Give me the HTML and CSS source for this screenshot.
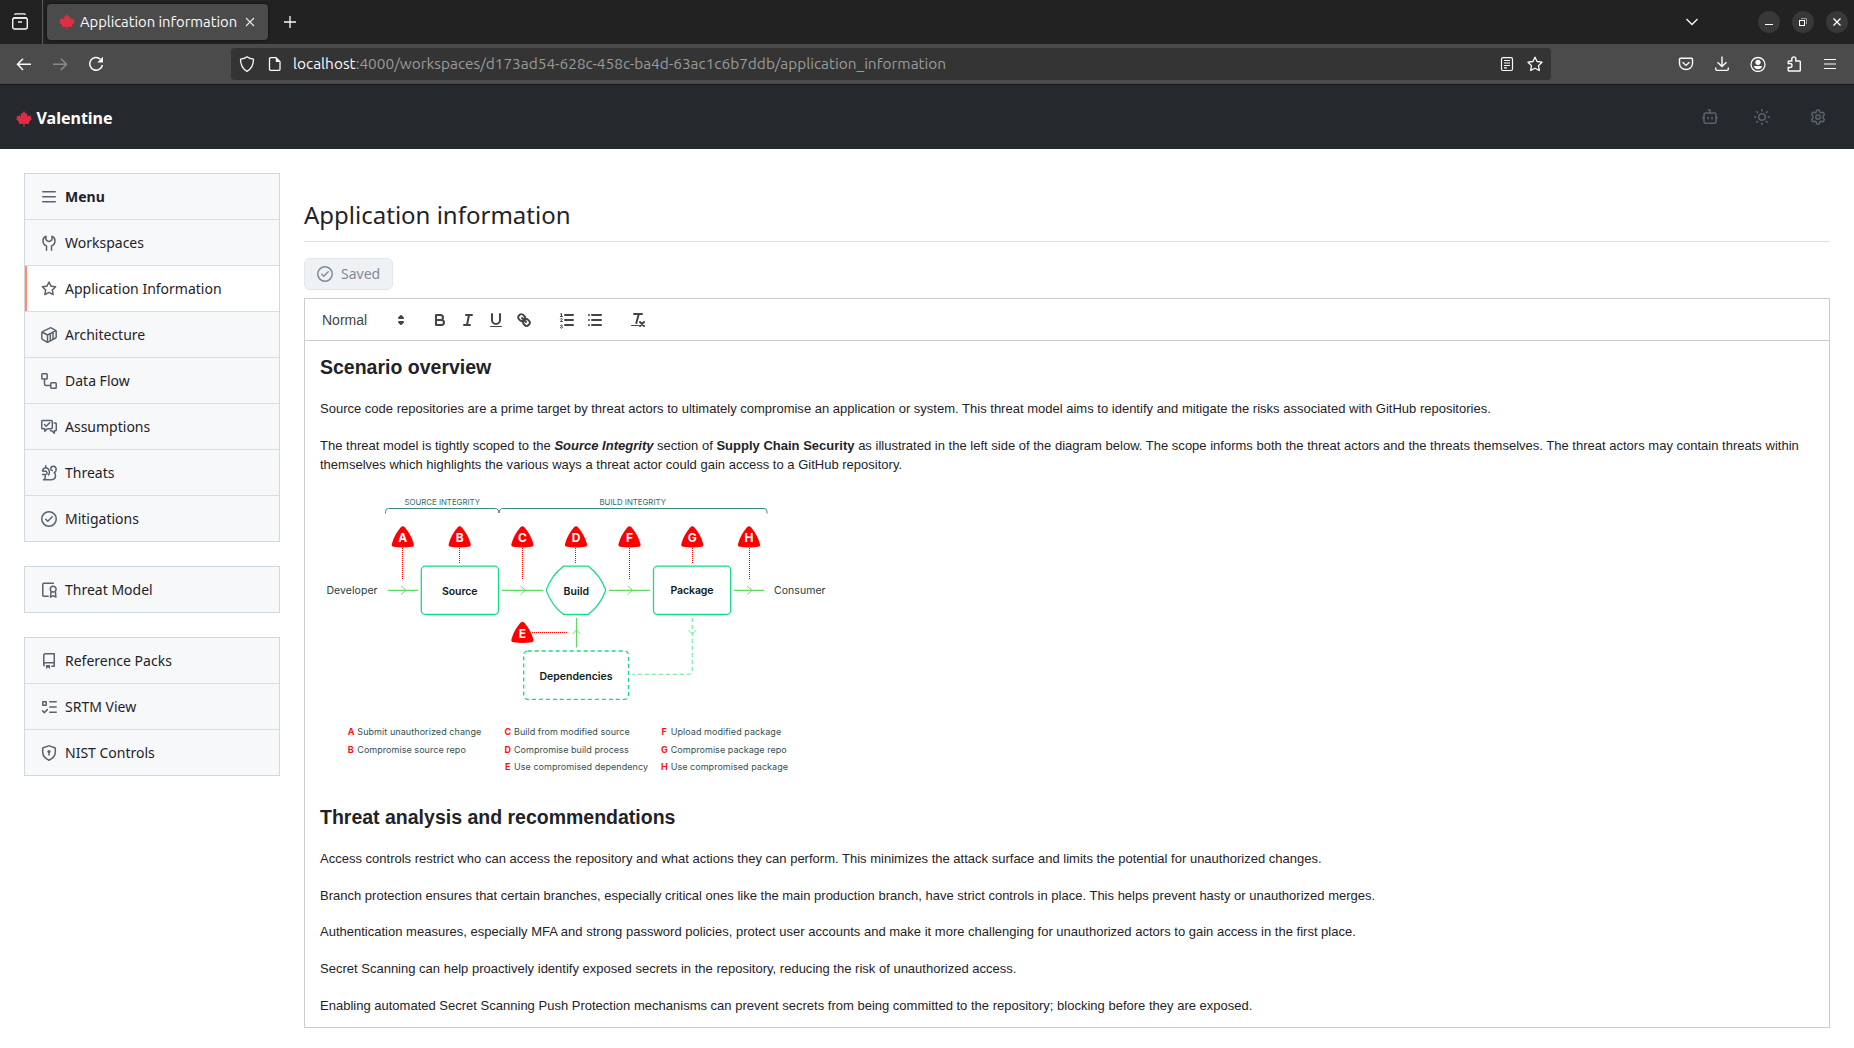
FILE: index.html
```html
<!DOCTYPE html>
<html lang="en">
<head>
<meta charset="utf-8">
<title>Application information</title>
<link rel="stylesheet" href="styles.css">
</head>
<body>
<svg width="0" height="0" class="defs" aria-hidden="true">
  <defs>
    <symbol id="leaf" viewBox="0 0 16 16"><path fill="#dd2e44" d="M8 0 9.800 2.700 11.300 1.900 11 5.500 13 3.900 13.500 5.200 15.300 5 14.900 7.200 16 8 12.800 11.200 13.300 12.900 8.500 12.800V16H7.500V12.800L2.700 12.900 3.200 11.200 0 8 1.100 7.200 .7 5 2.500 5.200 3 3.900 5 5.500 4.700 1.900 6.200 2.700Z"/></symbol>
    <symbol id="check-circle" viewBox="0 0 16 16"><path d="M0 8a8 8 0 1 1 16 0A8 8 0 0 1 0 8Zm1.500 0a6.500 6.500 0 1 0 13 0 6.500 6.500 0 0 0-13 0Zm10.280-1.720-4.500 4.500a.75.75 0 0 1-1.060 0l-2-2a.751.751 0 0 1 .018-1.042.751.751 0 0 1 1.042-.018l1.470 1.470 3.970-3.970a.751.751 0 0 1 1.042.018.751.751 0 0 1 .018 1.042Z"/></symbol>
    <symbol id="star" viewBox="0 0 16 16"><path d="M8 .25a.75.75 0 0 1 .673.418l1.882 3.815 4.210.612a.75.75 0 0 1 .416 1.279l-3.046 2.970.719 4.192a.751.751 0 0 1-1.088.791L8 12.347l-3.766 1.980a.75.75 0 0 1-1.088-.790l.720-4.194L.818 6.374a.75.75 0 0 1 .416-1.280l4.210-.611L7.327.668A.75.75 0 0 1 8 .250Zm0 2.445L6.615 5.500a.75.75 0 0 1-.564.410l-3.097.450 2.240 2.184a.75.75 0 0 1 .216.664l-.528 3.084 2.769-1.456a.75.75 0 0 1 .698 0l2.770 1.456-.530-3.084a.75.75 0 0 1 .216-.664l2.240-2.183-3.096-.450a.75.75 0 0 1-.564-.410L8 2.694Z"/></symbol>
    <path id="hazard" fill="#f00" d="M-2.200-19.500Q0-22 2.200-19.500C6-15 9-10 11-3Q11.500-.5 9-.2Q0 1-9-.2Q-11.500-.5-11-3C-9-10-6-15-2.200-19.500Z"/>
  </defs>
</svg>

<div class="tabstrip">
  <div class="recent"><svg width="18" height="18" viewBox="0 0 18 18"><g fill="none" stroke="#fbfbfe" stroke-width="1.400"><path d="M3.500 1.700Q4 .9 5 .9h8q1 0 1.500.8M2.200 4.900h13.600"/><rect x="1.700" y="5" width="14.600" height="11" rx="2"/><path d="M7 9h4"/></g></svg></div>
  <div class="tab">
    <svg class="tab-icon" width="16" height="16"><use href="#leaf"/></svg>
    <span class="tab-title">Application information</span>
    <svg class="tab-close" width="10" height="10" viewBox="0 0 10 10"><path d="M1 1l8 8M9 1L1 9" stroke="#e8e8ec" stroke-width="1.100"/></svg>
  </div>
  <svg class="tab-new" width="12" height="12" viewBox="0 0 12 12"><path d="M6 0v12M0 6h12" stroke="#fbfbfe" stroke-width="1.300"/></svg>
  <svg class="tab-list" width="12" height="8" viewBox="0 0 12 8"><path d="M.5 1 6 6.500 11.500 1" fill="none" stroke="#fbfbfe" stroke-width="1.300"/></svg>
  <div class="window-buttons">
    <span><svg width="22" height="22" viewBox="0 0 22 22"><path d="M7 13.500h8" stroke="#fff"/></svg></span>
    <span><svg width="22" height="22" viewBox="0 0 22 22"><path d="M9 7.500h5.500V13" fill="none" stroke="#999"/><rect x="7.500" y="9.500" width="5" height="5" fill="none" stroke="#fff"/></svg></span>
    <span><svg width="22" height="22" viewBox="0 0 22 22"><path d="M7.500 7.500l7 7M14.500 7.500l-7 7" stroke="#fff" stroke-width="1.300"/></svg></span>
  </div>
</div>

<div class="navbar">
  <div class="nav-left">
    <svg width="16" height="16" viewBox="0 0 16 16"><path d="M15 8.300H1.500M7 2.700 1.500 8.300 7 14" fill="none" stroke="#fbfbfe" stroke-width="1.500"/></svg>
    <svg width="16" height="16" viewBox="0 0 16 16"><path d="M1 8.300h13.500M9 2.700l5.500 5.600L9 14" fill="none" stroke="#8b8b8b" stroke-width="1.500"/></svg>
    <svg width="16" height="16" viewBox="0 0 16 16"><path d="M12.500 3.200A6.400 6.400 0 1 0 14.400 9" fill="none" stroke="#fbfbfe" stroke-width="1.500"/><path d="M15 .8v5.700H9.300z" fill="#fbfbfe"/></svg>
  </div>
  <div class="urlbar">
    <svg class="u-shield" width="16" height="16" viewBox="0 0 16 16"><path d="M8 .8c2 1.600 4 2.100 6.500 2.300C14.500 9 12.500 13 8 15.300 3.500 13 1.500 9 1.500 3.100 4 2.900 6 2.400 8 .8Z" fill="none" stroke="#fbfbfe" stroke-width="1.300" stroke-linejoin="round"/></svg>
    <svg class="u-page" width="14" height="16" viewBox="0 0 14 16"><path d="M2.500 1.700H8l4 4v7.600q0 1-1 1H2.500q-1 0-1-1V2.700q0-1 1-1Z" fill="none" stroke="#fbfbfe" stroke-width="1.300"/><path d="M7.800 1.300v4.600h4.600z" fill="#fbfbfe"/></svg>
    <span class="url"><b>localhost</b>:4000/workspaces/d173ad54-628c-458c-ba4d-63ac1c6b7ddb/application_information</span>
    <svg class="u-reader" width="14" height="16" viewBox="0 0 14 16"><g fill="none" stroke="#fbfbfe" stroke-width="1.200"><rect x="1.500" y="1.700" width="11" height="12.800" rx="1.500"/><path d="M4 4.500h6M4 7h6M4 9.500h6M4 11.800h3"/></g></svg>
    <svg class="u-star" width="16" height="16" viewBox="0 0 16 16"><path d="m8 1.200 2.100 4.300 4.900.700-3.500 3.400.8 4.900L8 12.200l-4.300 2.300.8-4.900L1 6.200l4.900-.7z" fill="none" stroke="#fbfbfe" stroke-width="1.300" stroke-linejoin="round"/></svg>
  </div>
  <div class="nav-right">
    <svg width="16" height="16" viewBox="0 0 16 16"><g fill="none" stroke="#fbfbfe" stroke-width="1.400"><path d="M2.500 2.300h11q1 0 1 1V7.500a6.500 6 0 0 1-13 0V3.300q0-1 1-1Z"/><path d="M4.600 6.300 8 9.400l3.400-3.100"/></g></svg>
    <svg width="16" height="16" viewBox="0 0 16 16"><path d="M8 .5v10M3.500 6.200 8 10.600l4.500-4.400M1.700 11.500v1.600q0 1.300 1.300 1.300h10q1.300 0 1.300-1.300v-1.600" fill="none" stroke="#fbfbfe" stroke-width="1.400"/></svg>
    <svg width="16" height="16" viewBox="0 0 16 16"><circle cx="8" cy="8.500" r="7" fill="none" stroke="#fbfbfe" stroke-width="1.300"/><circle cx="8" cy="6.300" r="2.600" fill="#fbfbfe"/><path d="M3.800 10h8.400q-1 3.300-4.200 3.300T3.800 10Z" fill="#fbfbfe"/></svg>
    <svg width="16" height="16" viewBox="0 0 16 16"><path d="M5.800 5V2.900a2 2 0 0 1 4 0V5h3.700q.8 0 .8.800v8.400q0 .8-.8.800H3q-.8 0-.8-.8v-2.700H4a2 2 0 0 0 0-4H2.200V5.800Q2.200 5 3 5Z" fill="none" stroke="#fbfbfe" stroke-width="1.400"/></svg>
    <svg width="16" height="16" viewBox="0 0 16 16"><path d="M2 3.500h12M2 8h12M2 12.500h12" stroke="#fbfbfe" stroke-width="1.200"/></svg>
  </div>
</div>

<header class="app-header">
  <svg width="16" height="16"><use href="#leaf"/></svg>
  <span class="brand">Valentine</span>
  <div class="header-icons">
    <svg width="16" height="16" viewBox="0 0 16 16"><g fill="none" stroke="#59636e" stroke-width="1.500" stroke-linecap="round" stroke-linejoin="round"><rect x="2" y="4" width="12" height="10.200" rx="1.500"/><path d="M8 4V1H6.300M.8 8.700H2M14 8.700h1.200M6 8.300v1.400M10 8.300v1.400"/></g></svg>
    <svg width="16" height="16" viewBox="0 0 16 16"><g fill="none" stroke="#59636e" stroke-width="1.500"><circle cx="8" cy="8" r="3.250"/><path d="M8 0v2.400M8 13.600V16M0 8h2.400M13.600 8H16M2.300 2.300 4 4M12 12l1.700 1.700M13.700 2.300 12 4M4 12l-1.700 1.700"/></g></svg>
    <svg width="16" height="16" viewBox="0 0 16 16"><g fill="none" stroke="#59636e" stroke-width="1.500" stroke-linejoin="round"><circle cx="8" cy="8" r="2.200"/><path d="M6.700 1.200Q8 .7 9.300 1.200L9.800 3 11.200 3.800 13.100 3.300Q14.100 4.200 14.400 5.600L13.100 7V9L14.400 10.400Q14.100 11.800 13.100 12.700L11.200 12.200 9.800 13 9.300 14.800Q8 15.300 6.700 14.800L6.200 13 4.800 12.200 2.900 12.700Q1.900 11.800 1.600 10.400L2.900 9V7L1.600 5.600Q1.900 4.200 2.900 3.300L4.800 3.800 6.200 3Z"/></g></svg>
  </div>
</header>

<div class="layout">
  <aside class="sidebar">
    <nav class="side-nav">
      <a class="item heading"><svg viewBox="0 0 16 16"><path d="M1 2.750A.75.75 0 0 1 1.750 2h12.500a.75.75 0 0 1 0 1.500H1.750A.75.75 0 0 1 1 2.750Zm0 5A.75.75 0 0 1 1.750 7h12.500a.75.75 0 0 1 0 1.500H1.750A.75.75 0 0 1 1 7.750ZM1.750 12h12.500a.75.75 0 0 1 0 1.500H1.750a.75.75 0 0 1 0-1.500Z"/></svg>Menu</a>
      <a class="item"><svg viewBox="0 0 16 16"><path class="line" d="M5.500 15.200V10.900Q2 9.500 2 5.700 2 2.700 5 1.300V4.800Q6.500 6.500 8 6.500T11 4.800V1.300Q14 2.700 14 5.700q0 3.800-3.500 5.200v4.300"/></svg>Workspaces</a>
      <a class="item active"><svg><use href="#star"/></svg>Application Information</a>
      <a class="item"><svg viewBox="0 0 16 16"><path class="line" d="M1.500 4.600 9.200.9q.5-.2 1 0l4.300 2.400q.7.400.7 1.200v5.400q0 .7-.6 1.100l-7.500 4.100q-.6.300-1.200 0L1.400 12.300Q.8 12 .8 11.200V5.700q0-.8.7-1.100ZM1 5l5.500 3L15 3.700M6.500 8v7M9.300 7v6.500M12 5.500V12"/></svg>Architecture</a>
      <a class="item"><svg viewBox="0 0 16 16"><path class="line" d="M1.600.8h3.800q.8 0 .8.800v3.600q0 .8-.8.800H1.600Q.8 6 .8 5.200V1.600q0-.8.8-.8ZM10.600 9.800h3.800q.8 0 .8.800v3.800q0 .8-.8.800h-3.800q-.8 0-.8-.8v-3.800q0-.8.8-.8ZM3.500 6v5q0 1.500 1.500 1.500h4.800"/></svg>Data Flow</a>
      <a class="item"><svg viewBox="0 0 16 16"><path class="line" d="M1.700 1.500h8.600q1 0 1 1v6.300q0 1-1 1H6.500L3.800 12.300V9.800H1.700q-1 0-1-1V2.500q0-1 1-1ZM13.300 4h1q1 0 1 1v5.800q0 1-1 1h-1v2.400l-2.600-2.400H9.500M3.500 5.500l1.700 1.700 3.500-3.500"/></svg>Assumptions</a>
      <a class="item"><svg viewBox="0 0 16 16"><path class="line" d="M3.500 14.700h7.200q3.800-.3 3.800-4.200 0-1.800-1.300-2.700 2-.8 2-3.200 0-3.300-2.900-3.300-2.500 0-2.500 2.600 0 1.600 1.500 1.600M4.700.8v2Q2 3.200 1.500 5.800q1.500.8 3.500.4M4.700 2.800q2.500 0 3.500 3 .8 2.200-.6 4.200M1.500 9.500h2.700v3.200q0 2-1.700 2M5 6.200q1.500 1 .8 3"/></svg>Threats</a>
      <a class="item"><svg><use href="#check-circle"/></svg>Mitigations</a>
    </nav>
    <nav class="side-nav">
      <a class="item"><svg viewBox="0 0 16 16"><path class="line" d="M7.200 14.200H2.800q-1 0-1-1V2.200q0-1 1-1h9.600M12.200 4.300a2.900 2.900 0 1 1 0 5.800 2.900 2.900 0 0 1 0-5.800ZM10 9.500 9.500 15.200l2.700-1.500 2.700 1.500-.5-5.700"/></svg>Threat Model</a>
    </nav>
    <nav class="side-nav">
      <a class="item"><svg viewBox="0 0 16 16"><path d="M2 2.500A2.500 2.500 0 0 1 4.500 0h8.750a.75.75 0 0 1 .75.750v12.500a.75.75 0 0 1-.75.750h-2.500a.75.75 0 0 1 0-1.500h1.750v-2h-8a1 1 0 0 0-.714 1.700.75.75 0 1 1-1.072 1.050A2.495 2.495 0 0 1 2 11.500Zm10.500-1h-8a1 1 0 0 0-1 1v6.708A2.486 2.486 0 0 1 4.500 9h8ZM5 12.250a.25.25 0 0 1 .25-.25h3.500a.25.25 0 0 1 .25.250v3.250a.25.25 0 0 1-.400.200l-1.450-1.087a.249.249 0 0 0-.300 0L5.400 15.700a.25.25 0 0 1-.400-.200Z"/></svg>Reference Packs</a>
      <a class="item"><svg viewBox="0 0 16 16"><path class="line" d="M1.800 2.800h3.400v3.400H1.800ZM8.800 2.800h6.400M8.800 8h6.400M8.800 13.200h6.400M1.500 11.800l1.800 1.800 3-3"/></svg>SRTM View</a>
      <a class="item"><svg viewBox="0 0 16 16"><path class="line" d="M7.700.9q.3-.1.600 0l5.500 1.800q.5.200.5.700V7q0 5.500-6.300 8.200Q1.700 12.500 1.700 7V3.400q0-.5.500-.7Z"/><circle cx="8" cy="6.600" r="1.600"/><path d="M7.250 7h1.500v3.500h-1.500z"/></svg>NIST Controls</a>
    </nav>
  </aside>

  <main class="content">
    <h1>Application information</h1>
    <button class="saved" disabled><svg width="16" height="16"><use href="#check-circle"/></svg><span>Saved</span></button>
    <div class="toolbar">
      <span class="picker">Normal<svg width="18" height="18" viewBox="0 0 18 18"><path d="M7 11l2 2 2-2zM7 7l2-2 2 2z"/></svg></span>
      <span class="group">
        <svg viewBox="0 0 18 18"><path d="M5 4h4.500a2.500 2.500 0 0 1 0 5H5ZM5 9h5.500a2.500 2.500 0 0 1 0 5H5Z"/></svg>
        <svg viewBox="0 0 18 18"><path d="M7 4h6M5 14h6M8 14l2-10"/></svg>
        <svg viewBox="0 0 18 18"><path d="M5 3v6a4 4 0 0 0 8 0V3"/><rect class="solid" x="3" y="15" width="12" height="1" rx=".5"/></svg>
        <svg viewBox="0 0 18 18"><path d="M7 7l4 4M8.900 4.577a3.476 3.476 0 0 1 .360 4.679A3.476 3.476 0 0 1 4.577 8.900C3.185 7.500 2.035 6.400 4.217 4.217S7.500 3.185 8.900 4.577ZM13.423 9.100a3.476 3.476 0 0 0-4.679-.360 3.476 3.476 0 0 0 .360 4.679c1.392 1.392 2.500 2.542 4.679.360s1.040-3.287-.360-4.679Z"/></svg>
      </span>
      <span class="group">
        <svg viewBox="0 0 18 18"><path d="M7 4h8M7 9h8M7 14h8"/><path class="thin" d="M2.500 5.500h2M3.500 5.500v-3L2.500 3M4.500 10.500h-2c0-1 1.850-1.200 1.850-2.100a.96.96 0 0 0-1.850-.3M2.500 14.600a.96.96 0 0 1 1.850.1c0 .6-.6.800-.9.800.5 0 1 .3 1 .9a1 1 0 0 1-1.950.1"/></svg>
        <svg viewBox="0 0 18 18"><path d="M6 4h9M6 9h9M6 14h9M3 4h0M3 9h0M3 14h0"/></svg>
      </span>
      <span class="group">
        <svg viewBox="0 0 18 18"><path d="M5 3h8M9.650 3.500 7.350 12M11 11l4 4M15 11l-4 4"/><rect class="solid" x="2" y="14" width="8" height="1" rx=".5"/></svg>
      </span>
    </div>
    <article class="editor">
      <h2>Scenario overview</h2>
      <p>Source code repositories are a prime target by threat actors to ultimately compromise an application or system. This threat model aims to identify and mitigate the risks associated with GitHub repositories.</p>
      <p>The threat model is tightly scoped to the <strong><em>Source Integrity</em></strong> section of <strong>Supply Chain Security</strong> as illustrated in the left side of the diagram below. The scope informs both the threat actors and the threats themselves. The threat actors may contain threats within themselves which highlights the various ways a threat actor could gain access to a GitHub repository.</p>
      <svg class="diagram" width="520" height="311" viewBox="320 473 520 311">
        <g fill="none" stroke="#3e8680">
          <path d="M385.500 513.500v-2q0-3 3-3h107q3 0 3.500 4.500.5-4.500 3.500-4.500h261.500q3 0 3 3v2"/>
        </g>
        <g class="zone"><text x="404.500" y="505.200" textLength="75.500">SOURCE INTEGRITY</text><text x="599.500" y="505.200" textLength="66.500">BUILD INTEGRITY</text></g>
        <g fill="none" stroke="#f00" stroke-dasharray="1 1" shape-rendering="crispEdges">
          <path d="M402.500 548v31M459.500 548v15M522.500 548v31M575.500 548v15M629.500 548v31M692.500 548v15M749.500 548v31M532 632.500h36"/>
        </g>
        <g fill="none" stroke="#5fdc60" stroke-width="1.200">
          <path d="M388 590.300h30M502 590.300h41M609 590.300h41M734 590.300h30M576.500 618v29.500"/>
          <path stroke-width=".9" d="M401 586l5 4.300-5 4.300M520.500 586l5 4.300-5 4.300M627.500 586l5 4.300-5 4.300M747 586l5 4.300-5 4.300M572.500 634l4-4 4 4"/>
        </g>
        <g fill="none" stroke="#16da85" stroke-width="1.300">
          <rect x="421.300" y="566.200" width="77.200" height="48.300" rx="4"/>
          <rect x="653.500" y="566.200" width="77.200" height="48.300" rx="4"/>
          <path d="M563.500 566.200h24.800Q600 575 605.300 589q.5 1.300 0 2.600Q600 605.500 588.300 614.500h-24.800Q551.800 605.500 546.700 591.600q-.5-1.300 0-2.600Q551.800 575 563.500 566.200Z"/>
          <rect x="523.700" y="651" width="104.800" height="48.300" rx="4" stroke-dasharray="4 3"/>
        </g>
        <path fill="none" stroke="#7ce8ad" stroke-width="1.200" stroke-dasharray="4 3" d="M692.300 618v52q0 4.300-4 4.300h-56"/>
        <path fill="none" stroke="#7ce8ad" d="M688.300 630l4 4 4-4"/>
        <g>
          <use href="#hazard" x="402.800" y="547"/><use href="#hazard" x="459.700" y="547"/><use href="#hazard" x="522.400" y="547"/><use href="#hazard" x="576" y="547"/><use href="#hazard" x="629.500" y="547"/><use href="#hazard" x="692.300" y="547"/><use href="#hazard" x="749" y="547"/><use href="#hazard" x="522.400" y="642.500"/>
        </g>
        <g class="mark"><text x="402.800" y="542">A</text><text x="459.700" y="542">B</text><text x="522.400" y="542">C</text><text x="576" y="542">D</text><text x="629.500" y="542">F</text><text x="692.300" y="542">G</text><text x="749" y="542">H</text><text x="522.400" y="637.500">E</text></g>
        <g class="actor"><text x="326.500" y="594" textLength="51">Developer</text><text x="774" y="594" textLength="51.500">Consumer</text></g>
        <g class="node"><text x="442" y="594.600" textLength="35.500">Source</text><text x="563.500" y="594.600" textLength="25.500">Build</text><text x="670.500" y="593.800" textLength="43">Package</text><text x="539.500" y="679.500" textLength="73">Dependencies</text></g>
        <g class="letter"><text x="347.800" y="735.300">A</text><text x="347.800" y="752.800">B</text><text x="504.500" y="735.300">C</text><text x="504.500" y="752.800">D</text><text x="505" y="770.300">E</text><text x="661.500" y="735.300">F</text><text x="661" y="752.800">G</text><text x="661" y="770.300">H</text></g>
        <g class="legend"><text x="357.300" y="735.300" textLength="124">Submit unauthorized change</text><text x="357.300" y="752.800" textLength="108.500">Compromise source repo</text><text x="514" y="735.300" textLength="115.700">Build from modified source</text><text x="514" y="752.800" textLength="114.700">Compromise build process</text><text x="514" y="770.300" textLength="134">Use compromised dependency</text><text x="670.700" y="735.300" textLength="110.500">Upload modified package</text><text x="670.700" y="752.800" textLength="116">Compromise package repo</text><text x="670.700" y="770.300" textLength="117.300">Use compromised package</text></g>
      </svg>
      <h2 class="analysis">Threat analysis and recommendations</h2>
      <p>Access controls restrict who can access the repository and what actions they can perform. This minimizes the attack surface and limits the potential for unauthorized changes.</p>
      <p>Branch protection ensures that certain branches, especially critical ones like the main production branch, have strict controls in place. This helps prevent hasty or unauthorized merges.</p>
      <p>Authentication measures, especially MFA and strong password policies, protect user accounts and make it more challenging for unauthorized actors to gain access in the first place.</p>
      <p>Secret Scanning can help proactively identify exposed secrets in the repository, reducing the risk of unauthorized access.</p>
      <p>Enabling automated Secret Scanning Push Protection mechanisms can prevent secrets from being committed to the repository; blocking before they are exposed.</p>
    </article>
  </main>
</div>
</body>
</html>
```

FILE: styles.css
```css
* { box-sizing: border-box; }
body { margin: 0; height: 1048px; overflow: hidden; background: #fff; color: #1f2328; font-family: "Noto Sans", sans-serif; font-size: 14px; line-height: 21px; }
svg { display: block; flex: none; }
.defs { position: absolute; }

/* browser chrome */
.tabstrip { height: 44px; background: #222; display: flex; align-items: center; font-family: Ubuntu, "Noto Sans", sans-serif; }
.recent { width: 43px; height: 44px; border-right: 1px solid #5a5a5a; display: flex; align-items: center; padding-left: 11px; }
.tab { width: 221px; height: 36px; margin-left: 4px; background: #4b4b4b; border-radius: 4px; display: flex; align-items: center; padding-left: 12px; box-shadow: 0 0 3px #000a; }
.tab-title { width: 156px; height: 23px; margin-left: 5px; color: #fbfbfe; font-size: 14.800px; white-space: nowrap; letter-spacing: -.020px; }
.tab-close { margin-left: 9px; }
.tab-new { margin-left: 16px; }
.tab-list { margin-left: auto; }
.window-buttons { display: flex; gap: 12px; margin: 0 6px 0 60px; }
.window-buttons span { width: 22px; height: 22px; border-radius: 50%; background: #383838; }
.navbar { height: 41px; background: #4b4b4b; border-bottom: 1px solid #19191b; display: flex; align-items: center; font-family: Ubuntu, "Noto Sans", sans-serif; }
.nav-left { width: 231px; padding-left: 16px; display: flex; gap: 20px; }
.urlbar { width: 1320px; height: 32px; background: #343434; border-radius: 4px; display: flex; align-items: center; padding: 0 8px 0 8px; }
.u-page { margin-left: 13px; }
.url { height: 23px; margin-left: 11px; color: #9b9b9b; font-size: 15.400px; white-space: nowrap; }
.url b { color: #fbfbfe; font-weight: 400; }
.u-reader { margin-left: auto; }
.u-star { margin-left: 13px; }
.nav-right { margin-left: auto; padding-right: 16px; display: flex; gap: 20px; }

/* application */
.app-header { height: 64px; background: #25292e; display: flex; align-items: center; padding: 3px 28px 0 16px; }
.brand { margin-left: 4.500px; color: #fff; font-size: 16px; font-weight: 700; }
.header-icons { margin-left: auto; display: flex; padding-bottom: 4px; }
.header-icons svg + svg { margin-left: 36px; }
.header-icons svg + svg + svg { margin-left: 40px; }
.layout { display: flex; gap: 24px; padding: 24px; }
.sidebar { width: 256px; display: flex; flex-direction: column; gap: 24px; }
.side-nav { border: 1px solid #d1d9e0; background: #f6f8fa; }
.item { height: 46px; display: flex; align-items: center; padding: 0 15px 0 16px; }
.item + .item { border-top: 1px solid #d8dee4; }
.item:first-child { height: 45px; }
.item svg { width: 16px; height: 16px; margin-right: 8px; fill: #59636e; }
.item .line { fill: none; stroke: #59636e; stroke-width: 1.500; stroke-linecap: round; stroke-linejoin: round; }
.heading { font-weight: 700; }
.active { background: #fff; box-shadow: inset 2px 0 #fd8c73; }

.content { flex: 1; min-width: 0; padding-top: 24px; }
h1 { margin: 0 0 16px; height: 45px; border-bottom: 1px solid #d8dee4; font-size: 24px; line-height: 36px; font-weight: 400; }
.saved { width: 89px; height: 32px; margin: 0 0 8px; padding: 0 12px; display: flex; align-items: center; gap: 8px; border: 1px solid #e1e6eb; border-radius: 6px; background: #eff2f5; color: #818b98; font: 14px "Noto Sans", sans-serif; }
.saved svg { fill: #818b98; }
.saved span { padding-bottom: 2px; }
.toolbar { height: 43px; border: 1px solid #ccc; display: flex; align-items: center; padding-left: 8px; font: 500 14px "Liberation Sans", sans-serif; color: #444; }
.picker { width: 98px; padding: 0 1px 0 9px; margin-right: 15px; display: flex; justify-content: space-between; align-items: center; }
.picker svg { fill: #444; stroke: #444; stroke-width: 2; stroke-linejoin: round; }
.group { display: flex; margin-right: 15px; }
.group svg { width: 28px; height: 18px; padding: 0 5px; fill: none; stroke: #444; stroke-width: 2; stroke-linecap: round; stroke-linejoin: round; }
.group .solid { fill: #444; stroke: none; }
.group .thin { stroke-width: 1; }
.editor { border: 1px solid #ccc; border-top: 0; padding: 13px 15px 11px; font: 13px/18.460px "Liberation Sans", Arial, sans-serif; letter-spacing: .006px; }
.editor h2 { margin: 0 0 18.460px; font-size: 19.500px; line-height: 27.690px; font-weight: 700; letter-spacing: 0; }
.editor .analysis { margin-bottom: 18.140px; }
.editor p { margin: 0 0 18.460px; }
.editor p:last-child { margin: 0; }

.diagram { margin: -19.460px 0 19.860px; font-family: Inter, sans-serif; letter-spacing: 0; }
.zone { font-size: 7.800px; fill: #2f6d6b; }
.mark { font-size: 12px; font-weight: 700; fill: #fff; text-anchor: middle; }
.actor { font-size: 10.500px; fill: #27403f; }
.node { font-size: 10.500px; font-weight: 600; fill: #0c2222; }
.letter { font-size: 9px; font-weight: 700; fill: #f11; }
.legend { font-size: 9px; fill: #35504f; }
```
